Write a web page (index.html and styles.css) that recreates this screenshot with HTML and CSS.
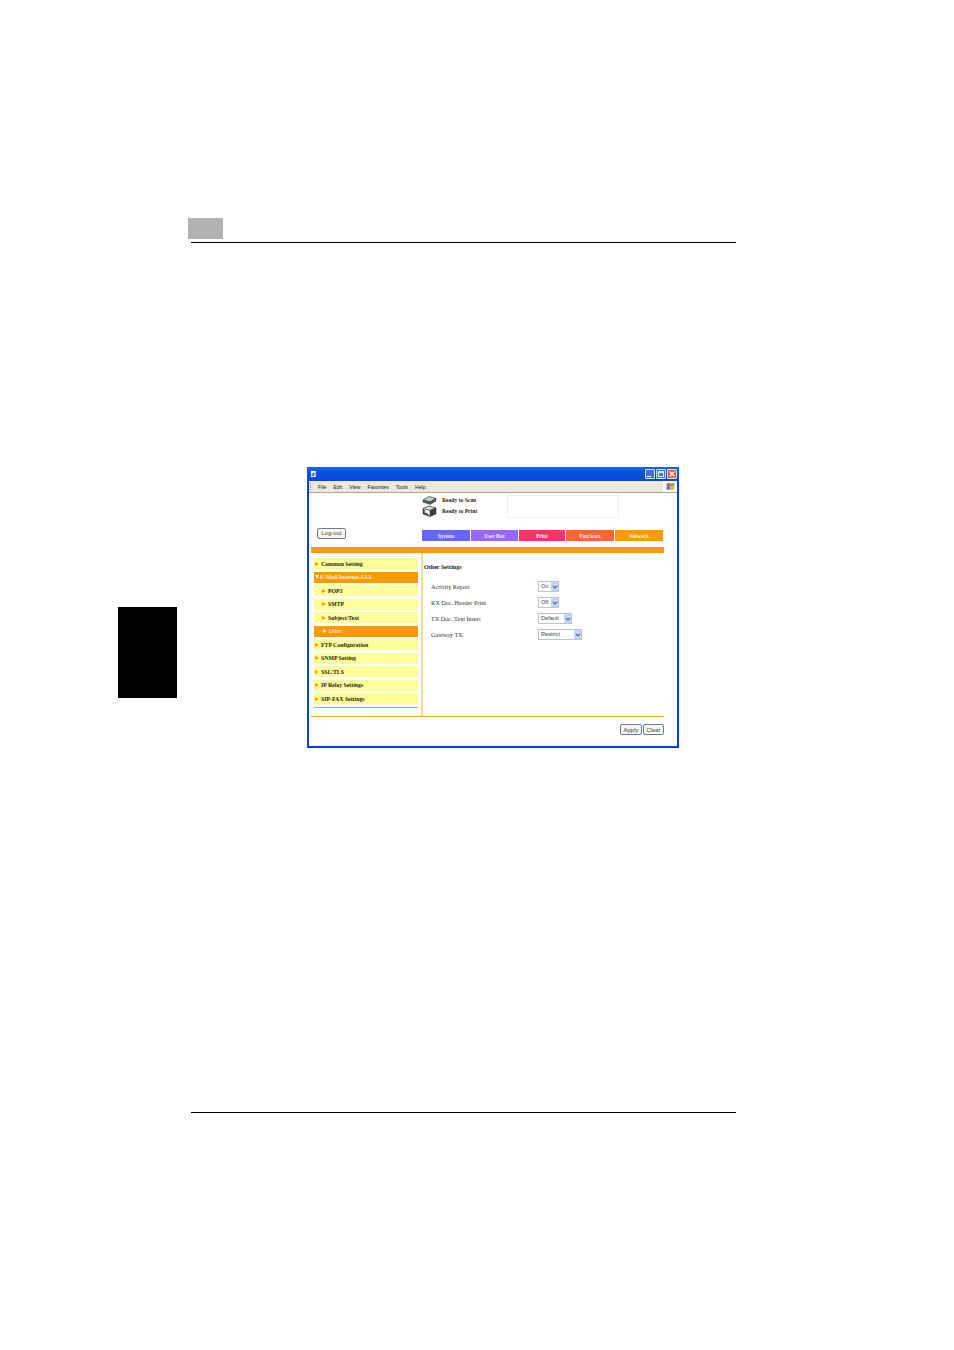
FILE: index.html
```html
<!DOCTYPE html>
<html lang="en">
<head>
<meta charset="utf-8">
<title>Other Settings</title>
<link rel="stylesheet" href="styles.css">
</head>
<body>
<div class="page">
  <header class="page-head">
    <div class="chapter-box"></div>
    <div class="rule"></div>
  </header>
  <div class="side-tab"></div>

  <div class="window">
    <div class="titlebar">
      <svg class="ie-doc" viewBox="0 0 8 8"><rect x="1" y="0.5" width="5.5" height="7" fill="#fff"/><path d="M1 5 L4 2 L6 4 L4 7Z" fill="#4a7fb8"/></svg>
      <div class="win-btns">
        <span class="win-btn"><i class="glyph-min"></i></span>
        <span class="win-btn"><i class="glyph-max"></i></span>
        <span class="win-btn win-close"><svg viewBox="0 0 8 8"><path d="M1.5 1.5 L6.5 6.5 M6.5 1.5 L1.5 6.5" stroke="#fff" stroke-width="1.3"/></svg></span>
      </div>
    </div>
    <div class="menubar">
      <span class="grip"></span>
      <span class="menu-item m1">File</span><span class="menu-item m2">Edit</span><span class="menu-item m3">View</span><span class="menu-item m4">Favorites</span><span class="menu-item m5">Tools</span><span class="menu-item m6">Help</span>
      <span class="flag-wrap">
        <svg class="flag" viewBox="0 0 8 8"><path d="M0.5 1.5 Q2 0.6 4 1.2 V4 Q2 3.4 0.5 4.2Z" fill="#e8562a"/><path d="M4 1.2 Q5.6 1.6 7.5 0.6 V3.4 Q5.6 4.4 4 4Z" fill="#6cb33f"/><path d="M0.5 4.2 Q2 3.4 4 4 V7 Q2 6.4 0.5 7.2Z" fill="#3a7fd5"/><path d="M4 4 Q5.6 4.4 7.5 3.4 V6.4 Q5.6 7.4 4 7Z" fill="#f4b81c"/></svg>
      </span>
    </div>

    <div class="content">
      <div class="top">
        <div class="top-left">
          <button class="btn logout" type="button">Log-out</button>
        </div>
        <div class="top-right">
          <div class="status-row">
            <div class="status-list">
              <div class="status"><svg class="printer" viewBox="0 0 15 10"><path d="M1 5 L7 1.5 L14 3.5 L8 7Z" fill="#c9cdd0" stroke="#333" stroke-width=".7"/><path d="M1 5 V7 L8 9.5 L14 6 V3.5 L8 7Z" fill="#55605f" stroke="#222" stroke-width=".5"/></svg><span>Ready to Scan</span></div>
              <div class="status"><svg class="printer" viewBox="0 0 15 12"><path d="M1 3.5 L7 1 L14 3 L8 5.5Z" fill="#d5d8d9" stroke="#333" stroke-width=".7"/><path d="M1 3.5 V9 L8 11.5 L14 9 V3 L8 5.5 V11.5" fill="#39423f" stroke="#222" stroke-width=".5"/><path d="M2.5 6 L7 7.5 V9 L2.5 7.5Z" fill="#e4e6e6"/></svg><span>Ready to Print</span></div>
            </div>
            <div class="msg-box"></div>
          </div>
          <nav class="tabs">
            <a class="tab t-system">System</a>
            <a class="tab t-user">User Box</a>
            <a class="tab t-print">Print</a>
            <a class="tab t-fax">Fax/Scan</a>
            <a class="tab t-net">Network</a>
          </nav>
        </div>
      </div>
      <div class="orange-bar"></div>

      <div class="main">
        <aside class="nav">
          <a class="nav-item"><i class="arr"></i>Common Setting</a>
          <a class="nav-item on"><i class="arr down"></i>E-Mail/Internet FAX</a>
          <a class="nav-item sub"><i class="arr"></i>POP3</a>
          <a class="nav-item sub"><i class="arr"></i>SMTP</a>
          <a class="nav-item sub"><i class="arr"></i>Subject/Text</a>
          <a class="nav-item sub on thin"><i class="arr pale"></i>Other</a>
          <a class="nav-item"><i class="arr"></i>FTP Configuration</a>
          <a class="nav-item"><i class="arr"></i>SNMP Setting</a>
          <a class="nav-item"><i class="arr"></i>SSL/TLS</a>
          <a class="nav-item"><i class="arr"></i>IP Relay Settings</a>
          <a class="nav-item"><i class="arr"></i>SIP-FAX Settings</a>
          <div class="nav-end"></div>
        </aside>
        <section class="panel">
          <h1 class="panel-title">Other Settings</h1>
          <div class="form">
            <div class="row"><span class="lbl">Activity Report</span><span class="sel w21"><span class="sel-text">On</span><span class="sel-btn"><svg viewBox="0 0 6 6"><path d="M1 2 L3 4 L5 2" fill="none" stroke="#4a6ca8" stroke-width="1.2"/></svg></span></span></div>
            <div class="row"><span class="lbl">RX Doc. Header Print</span><span class="sel w21"><span class="sel-text">Off</span><span class="sel-btn"><svg viewBox="0 0 6 6"><path d="M1 2 L3 4 L5 2" fill="none" stroke="#4a6ca8" stroke-width="1.2"/></svg></span></span></div>
            <div class="row"><span class="lbl">TX Doc. Text Insert</span><span class="sel w34"><span class="sel-text">Default</span><span class="sel-btn"><svg viewBox="0 0 6 6"><path d="M1 2 L3 4 L5 2" fill="none" stroke="#4a6ca8" stroke-width="1.2"/></svg></span></span></div>
            <div class="row"><span class="lbl">Gateway TX</span><span class="sel w44"><span class="sel-text">Restrict</span><span class="sel-btn"><svg viewBox="0 0 6 6"><path d="M1 2 L3 4 L5 2" fill="none" stroke="#4a6ca8" stroke-width="1.2"/></svg></span></span></div>
          </div>
        </section>
      </div>
      <div class="foot">
        <button class="btn apply" type="button">Apply</button>
        <button class="btn clear" type="button">Clear</button>
      </div>
    </div>
  </div>

  <footer class="page-foot"></footer>
</div>
</body>
</html>
```
FILE: styles.css
```css
* { box-sizing: border-box; }
html, body { margin: 0; padding: 0; background: #fff; }
.page { position: relative; width: 954px; height: 1350px; overflow: hidden; padding-top: 218px; font-family: "Liberation Serif", serif; }

.page-head { margin-left: 188px; width: 548px; height: 25px; }
.chapter-box { width: 35px; height: 21px; background: #b2b2b2; }
.rule { margin: 3px 0 0 3px; height: 1px; background: #000; width: 545px; }
.side-tab { position: absolute; left: 118px; top: 607px; width: 59px; height: 91px; background: #000; }

.window { margin: 224px 0 0 307px; width: 372px; height: 281px; background: #0a3fcf; padding: 0 2px 2px; display: flex; flex-direction: column; }
.titlebar { height: 14px; margin: 0 -2px; padding: 0 2px 0 3px; flex: none; display: flex; align-items: center; justify-content: space-between; background: linear-gradient(#1a66e8, #0650e0 45%, #0a49d4); border-radius: 2px 2px 0 0; }
.ie-doc { width: 7px; height: 8px; }
.win-btns { display: flex; gap: 1px; }
.win-btn { width: 10px; height: 10px; border: 1px solid #d8e4f8; border-radius: 1px; background: #3f72e2; display: flex; align-items: center; justify-content: center; position: relative; }
.glyph-min { width: 4px; height: 1px; background: #fff; margin: 4px 2px 0 0; }
.glyph-max { width: 6px; height: 6px; border: 1px solid #e6eefc; border-top-width: 2px; }
.win-close { background: #e1583a; }
.win-close svg { width: 8px; height: 8px; }

.menubar { height: 12px; flex: none; background: #ece9d8; border-bottom: 1px solid #a9a695; display: flex; align-items: center; font-family: "Liberation Sans", sans-serif; font-size: 5.2px; color: #222; position: relative; }
.grip { width: 1px; height: 7px; margin-left: 1px; border-left: 1px dotted #888; }
.menu-item { line-height: 8px; }
.m1 { margin-left: 7px; } .m2 { margin-left: 7px; } .m3 { margin-left: 7px; } .m4 { margin-left: 7px; } .m5 { margin-left: 7px; } .m6 { margin-left: 7px; }
.flag-wrap { margin-left: auto; width: 14px; height: 11px; background: #fff; display: flex; align-items: center; justify-content: center; }
.flag { width: 9px; height: 9px; }

.content { flex: 1; background: #fff; display: flex; flex-direction: column; padding-left: 2px; }

.top { height: 54px; display: flex; flex: none; }
.top-left { width: 111px; padding: 28px 0 0 6px; }
.top-right { width: 241px; }
.status-row { display: flex; height: 37px; padding-top: 2px; }
.status-list { width: 85px; display: flex; flex-direction: column; }
.status { display: flex; align-items: center; height: 10px; font-size: 5.6px; font-weight: bold; color: #222; gap: 5px; }
.status:last-child { height: 12px; }
.printer { width: 15px; height: 100%; flex: none; }
.msg-box { width: 112px; height: 23px; border: 1px solid #eeeeea; }
.tabs { display: flex; gap: 1px; height: 11px; }
.tab { width: 47px; height: 11px; display: flex; align-items: center; justify-content: center; font-size: 5.3px; font-weight: bold; color: #f4f0f4; }
.t-system { width: 48px; background: #6666ff; }
.t-user { background: #9966ff; }
.t-print { width: 46px; background: #ff3366; }
.t-fax { width: 48px; background: #ff6633; }
.t-net { width: 48px; background: #ff9900; }

.orange-bar { height: 6px; width: 353px; background: #ff9900; flex: none; }

.main { height: 164px; flex: none; width: 353px; display: flex; border-bottom: 1px solid #e3a63c; }
.nav { width: 112px; padding: 5px 0 0 3px; border-right: 2px solid #f6d99a; display: flex; flex-direction: column; gap: 2.55px; flex: none; }
.nav-item { display: flex; align-items: center; width: 104px; height: 11px; background: #ffff99; font-size: 5.8px; font-weight: bold; color: #222; padding-left: 1px; flex: none; white-space: nowrap; }
.nav-item.sub { padding-left: 8px; }
.nav-item.on { background: #ff9900; color: #fbeedd; }
.nav-item.thin { font-weight: normal; }
.arr { width: 0; height: 0; border-left: 4px solid #ff9900; border-top: 2.5px solid transparent; border-bottom: 2.5px solid transparent; margin-right: 2px; flex: none; }
.arr.down { border-left: 2.5px solid transparent; border-right: 2.5px solid transparent; border-top: 4px solid #fff; border-bottom: 0; margin-right: 1px; }
.arr.pale { border-left-color: #fff3d8; margin-left: 1px; margin-right: 2px; }
.nav-end { width: 104px; height: 1px; background: #ff9900; }

.panel { flex: 1; padding: 11px 0 0 1px; }
.panel-title { margin: 0; font-size: 6.1px; line-height: 6px; font-weight: bold; color: #222; }
.form { margin: 11px 0 0 7px; display: flex; flex-direction: column; gap: 5px; }
.row { display: flex; align-items: center; height: 11px; font-size: 6.2px; color: #333; }
.lbl { width: 107px; white-space: nowrap; }
.sel { height: 11px; display: flex; justify-content: space-between; border: 1px solid #b5c5dc; background: #fff; font-family: "Liberation Sans", sans-serif; font-size: 5.6px; color: #444; line-height: 9px; }
.sel-text { padding-left: 2px; }
.sel-btn { width: 7px; background: #c5d5f0; display: flex; align-items: center; justify-content: center; }
.sel-btn svg { width: 6px; height: 6px; }
.w21 { width: 21px; } .w34 { width: 34px; } .w44 { width: 44px; }

.foot { flex: 1; width: 353px; display: flex; justify-content: flex-end; gap: 1px; padding-top: 7px; }
.btn { height: 11px; padding: 0; border: 1px solid #6d7f8c; border-radius: 2px; background: #f6f5ee; font-family: "Liberation Sans", sans-serif; font-size: 6px; line-height: 8px; color: #444; }
.logout { width: 29px; }
.apply { width: 22px; }
.clear { width: 21px; }

.page-foot { margin: 364px 0 0 191px; width: 545px; height: 1px; background: #000; }
```
